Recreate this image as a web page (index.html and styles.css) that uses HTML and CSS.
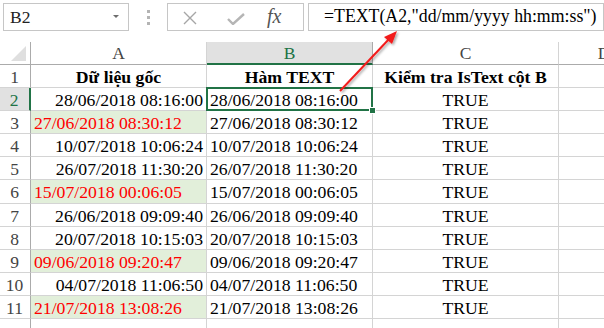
FILE: index.html
```html
<!DOCTYPE html>
<html lang="vi">
<head>
    <meta charset="UTF-8">
    <title>Hàm TEXT</title>
    <link rel="stylesheet" href="styles.css">
</head>
<body>
    <!-- Formula bar -->
    <div class="toolbar">
        <div class="name-box">
            <span>B2</span>
            <span class="caret"></span>
        </div>
        <div class="grip"><i></i><i></i><i></i></div>
        <div class="fx-buttons">
            <svg class="ico-x" width="14" height="14" viewBox="0 0 14 14">
                <path d="M1 1 L13 13 M13 1 L1 13" stroke="#a6a6a6" stroke-width="1.4" fill="none"/>
            </svg>
            <svg class="ico-ok" width="18" height="12" viewBox="0 0 18 12">
                <path d="M1 6 L6 11 L17 1" stroke="#b5b5b5" stroke-width="2.4" fill="none"/>
            </svg>
            <span class="fx">fx</span>
        </div>
        <div class="formula">=TEXT(A2,"dd/mm/yyyy hh:mm:ss")</div>
    </div>

    <!-- Sheet -->
    <div class="sheet">
        <div class="corner"><span class="tri"></span></div>
        <div class="col-head">A</div>
        <div class="col-head active">B</div>
        <div class="col-head">C</div>
        <div class="col-head">D</div>

        <div class="row-head">1</div>
        <div class="cell bold center">Dữ liệu gốc</div>
        <div class="cell bold center">Hàm TEXT</div>
        <div class="cell bold center">Kiểm tra IsText cột B</div>
        <div class="cell"></div>

        <div class="row-head active">2</div>
        <div class="cell right">28/06/2018 08:16:00</div>
        <div class="cell selected">28/06/2018 08:16:00</div>
        <div class="cell center">TRUE</div>
        <div class="cell"></div>

        <div class="row-head">3</div>
        <div class="cell text-val">27/06/2018 08:30:12</div>
        <div class="cell">27/06/2018 08:30:12</div>
        <div class="cell center">TRUE</div>
        <div class="cell"></div>

        <div class="row-head">4</div>
        <div class="cell right">10/07/2018 10:06:24</div>
        <div class="cell">10/07/2018 10:06:24</div>
        <div class="cell center">TRUE</div>
        <div class="cell"></div>

        <div class="row-head">5</div>
        <div class="cell right">26/07/2018 11:30:20</div>
        <div class="cell">26/07/2018 11:30:20</div>
        <div class="cell center">TRUE</div>
        <div class="cell"></div>

        <div class="row-head">6</div>
        <div class="cell text-val">15/07/2018 00:06:05</div>
        <div class="cell">15/07/2018 00:06:05</div>
        <div class="cell center">TRUE</div>
        <div class="cell"></div>

        <div class="row-head">7</div>
        <div class="cell right">26/06/2018 09:09:40</div>
        <div class="cell">26/06/2018 09:09:40</div>
        <div class="cell center">TRUE</div>
        <div class="cell"></div>

        <div class="row-head">8</div>
        <div class="cell right">20/07/2018 10:15:03</div>
        <div class="cell">20/07/2018 10:15:03</div>
        <div class="cell center">TRUE</div>
        <div class="cell"></div>

        <div class="row-head">9</div>
        <div class="cell text-val">09/06/2018 09:20:47</div>
        <div class="cell">09/06/2018 09:20:47</div>
        <div class="cell center">TRUE</div>
        <div class="cell"></div>

        <div class="row-head">10</div>
        <div class="cell right">04/07/2018 11:06:50</div>
        <div class="cell">04/07/2018 11:06:50</div>
        <div class="cell center">TRUE</div>
        <div class="cell"></div>

        <div class="row-head">11</div>
        <div class="cell text-val">21/07/2018 13:08:26</div>
        <div class="cell">21/07/2018 13:08:26</div>
        <div class="cell center">TRUE</div>
        <div class="cell"></div>

        <div class="row-head"></div>
        <div class="cell"></div>
        <div class="cell"></div>
        <div class="cell"></div>
        <div class="cell"></div>
    </div>

    <!-- annotation arrow -->
    <svg class="arrow" width="604" height="328" viewBox="0 0 604 328">
        <defs>
            <filter id="shade" x="-20%" y="-20%" width="140%" height="140%">
                <feDropShadow dx="1.5" dy="1.5" stdDeviation="1.2" flood-color="#000" flood-opacity="0.35"/>
            </filter>
        </defs>
        <g filter="url(#shade)">
            <line x1="340" y1="91" x2="390" y2="38" stroke="#f21b1b" stroke-width="2"/>
            <polygon points="397,31 384,37 392,44" fill="#f21b1b"/>
        </g>
    </svg>
</body>
</html>
```

FILE: styles.css
```css
body {
    margin: 0;
    width: 604px;
    height: 328px;
    overflow: hidden;
    background: #ffffff;
    font-family: "Liberation Serif", "Times New Roman", serif;
    font-size: 17.7px;
    color: #000;
    position: relative;
}

/* formula bar */
.toolbar {
    display: flex;
    align-items: flex-start;
    height: 42px;
    padding: 3px 0 0 3px;
    box-sizing: border-box;
}

.name-box {
    width: 126px;
    height: 28px;
    box-sizing: border-box;
    border: 1px solid #c6c6c6;
    display: flex;
    align-items: center;
    justify-content: space-between;
    padding: 0 9px 0 6px;
    font-size: 17.5px;
    color: #222;
}

.caret {
    width: 0;
    height: 0;
    border-left: 3px solid transparent;
    border-right: 3px solid transparent;
    border-top: 3px solid #6d6d6d;
    margin-top: -2px;
}

.grip {
    width: 38px;
    display: flex;
    flex-direction: column;
    align-items: center;
    gap: 3px;
    padding-top: 7px;
}

.grip i {
    display: block;
    width: 3px;
    height: 3px;
    background: #b4b4b4;
}

.fx-buttons {
    width: 137px;
    height: 28px;
    box-sizing: border-box;
    border: 1px solid #c6c6c6;
    display: flex;
    align-items: center;
    padding-left: 15px;
}

.ico-x {
    margin-top: 2px;
}

.ico-ok {
    margin-left: 30px;
    margin-top: 3px;
}

.fx {
    margin-left: 22px;
    font-style: italic;
    font-size: 20px;
    color: #555;
    margin-top: -2px;
}

.formula {
    margin-left: 4px;
    width: 296px;
    height: 28px;
    box-sizing: border-box;
    border: 1px solid #c6c6c6;
    padding-left: 15px;
    line-height: 25px;
    white-space: nowrap;
    font-size: 17.8px;
}

/* grid */
.sheet {
    display: grid;
    grid-template-columns: 31px 176px 166px 186px 91px;
    grid-template-rows: 23px repeat(11, 23.1px) 20px;
    width: 650px;
}

.corner {
    border-right: 1px solid #ababab;
    border-bottom: 1px solid #ababab;
    position: relative;
}

.corner .tri {
    position: absolute;
    right: 4px;
    bottom: 3px;
    width: 0;
    height: 0;
    border-left: 15px solid transparent;
    border-bottom: 15px solid #dfdfdf;
}

.col-head {
    border-right: 1px solid #d4d4d4;
    border-bottom: 1px solid #ababab;
    text-align: center;
    color: #444;
    font-size: 17.5px;
    line-height: 22px;
}

.col-head.active {
    background: #e1e1e1;
    color: #217346;
    border-bottom: 2px solid #217346;
    border-right-color: #ababab;
}

.row-head {
    border-right: 1px solid #ababab;
    border-bottom: 1px solid #d4d4d4;
    text-align: center;
    color: #444;
    font-size: 17.5px;
    line-height: 23px;
    padding: 1px 1px 0 0;
    white-space: nowrap;
    box-sizing: border-box;
}

.row-head.active {
    background: #e1e1e1;
    color: #217346;
    border-right: 2px solid #217346;
}

.cell {
    border-right: 1px solid #d4d4d4;
    border-bottom: 1px solid #d4d4d4;
    padding: 1px 3px 0;
    line-height: 22px;
    white-space: nowrap;
    overflow: hidden;
    box-sizing: border-box;
}

.cell.right {
    text-align: right;
}

.cell.center {
    text-align: center;
}

.cell.bold {
    font-weight: bold;
}

.cell.text-val {
    background: #e2efda;
    color: #ff0000;
}

.cell.selected {
    position: relative;
    overflow: visible;
}

.cell.selected::before {
    content: "";
    position: absolute;
    left: -1px;
    top: -1px;
    right: -1px;
    bottom: -1px;
    border: 2px solid #217346;
}

.cell.selected::after {
    content: "";
    position: absolute;
    right: -4px;
    bottom: -4px;
    width: 5px;
    height: 5px;
    background: #217346;
    border: 1px solid #fff;
}

.arrow {
    position: absolute;
    left: 0;
    top: 0;
    pointer-events: none;
}
```
